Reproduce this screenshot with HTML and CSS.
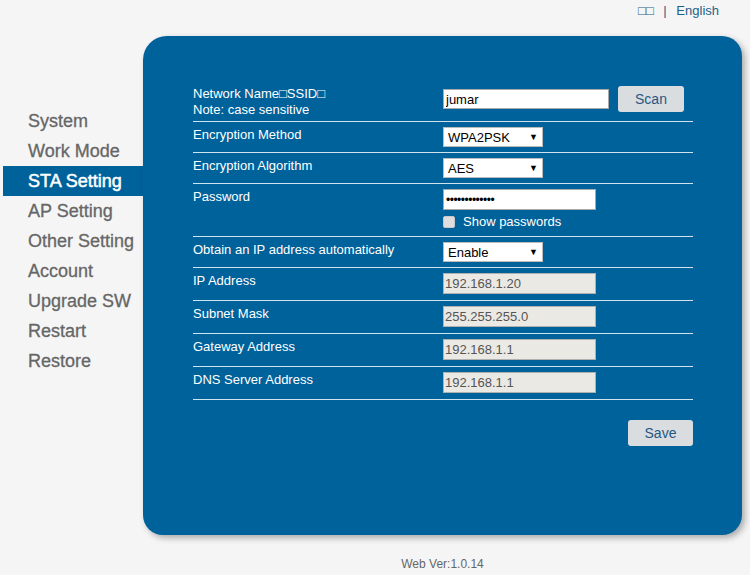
FILE: index.html
```html
<!DOCTYPE html>
<html lang="en">
<head>
    <meta charset="UTF-8">
    <meta name="viewport" content="width=device-width, initial-scale=1.0">
    <title>STA Setting</title>
    <link rel="stylesheet" href="styles.css">
</head>
<body>
    <div class="top">
        <span class="lang">□□ <span class="sep">|</span> English</span>
    </div>
    <div class="main">
        <ul class="menu">
            <li>System</li>
            <li>Work Mode</li>
            <li class="active">STA Setting</li>
            <li>AP Setting</li>
            <li>Other Setting</li>
            <li>Account</li>
            <li>Upgrade SW</li>
            <li>Restart</li>
            <li>Restore</li>
        </ul>
        <div class="panel">
            <div class="form">
                <div class="row first">
                    <div class="label">Network Name□SSID□<br>Note: case sensitive</div>
                    <div class="field inline">
                        <input type="text" class="ssid" value="jumar">
                        <button class="btn">Scan</button>
                    </div>
                </div>
                <div class="row">
                    <div class="label">Encryption Method</div>
                    <div class="field">
                        <div class="select-wrap">
                            <select><option>WPA2PSK</option></select>
                        </div>
                    </div>
                </div>
                <div class="row">
                    <div class="label">Encryption Algorithm</div>
                    <div class="field">
                        <div class="select-wrap">
                            <select><option>AES</option></select>
                        </div>
                    </div>
                </div>
                <div class="row pass">
                    <div class="label">Password</div>
                    <div class="field">
                        <input type="password" class="wide" value="jumar12345678">
                        <label class="check"><input type="checkbox"> Show passwords</label>
                    </div>
                </div>
                <div class="row">
                    <div class="label">Obtain an IP address automatically</div>
                    <div class="field">
                        <div class="select-wrap">
                            <select><option>Enable</option></select>
                        </div>
                    </div>
                </div>
                <div class="row ip">
                    <div class="label">IP Address</div>
                    <div class="field"><input type="text" class="wide" value="192.168.1.20" disabled></div>
                </div>
                <div class="row ip">
                    <div class="label">Subnet Mask</div>
                    <div class="field"><input type="text" class="wide" value="255.255.255.0" disabled></div>
                </div>
                <div class="row ip">
                    <div class="label">Gateway Address</div>
                    <div class="field"><input type="text" class="wide" value="192.168.1.1" disabled></div>
                </div>
                <div class="row ip">
                    <div class="label">DNS Server Address</div>
                    <div class="field"><input type="text" class="wide" value="192.168.1.1" disabled></div>
                </div>
            </div>
            <div class="actions">
                <button class="btn save">Save</button>
            </div>
        </div>
    </div>
    <div class="footer">Web Ver:1.0.14</div>
</body>
</html>
```

FILE: styles.css
```css
body {
    margin: 0;
    background-color: #f5f5f5;
    font-family: "Liberation Sans", Arial, sans-serif;
    font-size: 13px;
}
.top {
    height: 36px;
    display: flex;
    justify-content: flex-end;
    padding-right: 31px;
    box-sizing: border-box;
}
.lang {
    margin-top: 3px;
    line-height: 16px;
    font-size: 13px;
    color: #1d5f87;
}
.lang .sep {
    margin: 0 6px;
}
.main {
    display: flex;
    padding-left: 3px;
}
.menu {
    list-style: none;
    margin: 0;
    padding: 70px 0 0 0;
    width: 140px;
}
.menu li {
    height: 30px;
    line-height: 30px;
    padding-left: 25px;
    font-size: 18px;
    color: #666;
    -webkit-text-stroke: 0.3px #666;
    white-space: nowrap;
}
.menu li.active {
    background-color: #00629b;
    color: #fff;
    -webkit-text-stroke: 0.5px #fff;
}
.panel {
    width: 599px;
    height: 499px;
    box-sizing: border-box;
    padding: 49px 49px 0 50px;
    background-color: #00629b;
    border-radius: 24px 20px 20px 20px;
    box-shadow: 3px 3px 6px rgba(0,0,0,0.3);
}
.form {
    width: 500px;
}
.row {
    display: flex;
    padding: 5px 0;
    border-bottom: 1px solid #cfe3ef;
    color: #fff;
    line-height: 16px;
}
.row.first {
    padding: 1px 0 3px;
}
.row.pass {
    padding-bottom: 6px;
}
.row.ip {
    padding: 5px 0 6px;
}
.label {
    width: 250px;
    flex-shrink: 0;
}
.field {
    display: flex;
    flex-direction: column;
    align-items: flex-start;
}
.field.inline {
    flex-direction: row;
}
input[type="text"], input[type="password"] {
    font-family: "Liberation Sans", Arial, sans-serif;
    font-size: 13px;
    border: 1px solid #a9a9a9;
    background-color: #fff;
    color: #000;
    padding: 0 2px;
    margin: 0;
    box-sizing: border-box;
    outline: none;
}
.ssid {
    width: 166px;
    height: 20px;
    margin-top: 3px !important;
}
.wide {
    width: 153px;
    height: 21px;
}
input[type="password"] {
    font-size: 12px;
    letter-spacing: -0.5px;
}
input:disabled {
    background-color: #ebe9e4;
    color: #555;
    border-color: #b0b0b0;
    padding-left: 1px;
}
.select-wrap {
    position: relative;
}
.select-wrap::after {
    content: "▼";
    position: absolute;
    right: 5px;
    top: 4px;
    font-size: 9px;
    line-height: 12px;
    color: #000;
    pointer-events: none;
}
select {
    appearance: none;
    -webkit-appearance: none;
    width: 100px;
    height: 20px;
    padding: 0 4px;
    margin: 0;
    border: 1px solid #bbb;
    border-radius: 0;
    background-color: #fff;
    color: #000;
    font-family: "Liberation Sans", Arial, sans-serif;
    font-size: 13px;
}
.check {
    display: flex;
    align-items: center;
    margin-top: 4px;
    line-height: 16px;
    color: #fff;
}
.check input {
    appearance: none;
    -webkit-appearance: none;
    width: 12px;
    height: 12px;
    margin: 0 8px 0 0;
    border: 1px solid #c8c8c8;
    background-color: #dedede;
    border-radius: 2px;
}
.btn {
    width: 66px;
    height: 26px;
    margin-left: 9px;
    border: none;
    border-radius: 3px;
    background-color: #dadde0;
    color: #265783;
    font-family: "Liberation Sans", Arial, sans-serif;
    font-size: 14px;
    padding: 0;
}
.actions {
    display: flex;
    justify-content: flex-end;
    width: 500px;
    margin-top: 20px;
}
.btn.save {
    margin: 0;
    width: 65px;
}
.footer {
    width: 599px;
    margin: 21px 0 0 143px;
    text-align: center;
    font-size: 12px;
    line-height: 16px;
    color: #666;
}
```
